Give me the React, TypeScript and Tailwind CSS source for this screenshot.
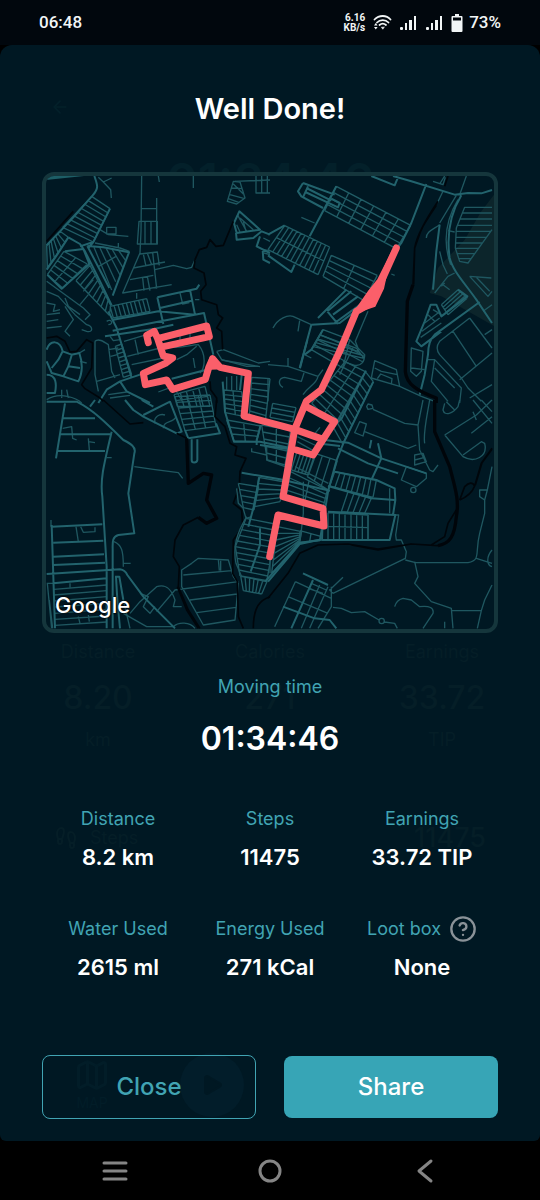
import React from 'react';
import { ArrowLeft, CircleHelp, Footprints, Map, Play } from 'lucide-react';

type Point = [number, number];

interface Block {
  corners: [Point, Point, Point, Point];
  cols: number;
  rows: number;
}

interface Tile {
  x: number;
  y: number;
  major: string[];
  minor: string[];
  river: string[];
  stream: string[];
  blocks: Block[];
}

const block = (corners: [Point, Point, Point, Point], cols: number, rows: number): Block => ({ corners, cols, rows });

// Streets of one housing block: the outline plus evenly spaced lanes
const blockPath = ({ corners: [a, b, c, d], cols, rows }: Block) => {
  const mix = (p: Point, q: Point, t: number) =>
    `${Math.round(p[0] + (q[0] - p[0]) * t)} ${Math.round(p[1] + (q[1] - p[1]) * t)}`;
  const lines: string[] = [];
  for (let i = 0; i <= cols; i++) lines.push(`M${mix(a, b, i / cols)}L${mix(d, c, i / cols)}`);
  for (let i = 0; i <= rows; i++) lines.push(`M${mix(a, d, i / rows)}L${mix(b, c, i / rows)}`);
  return lines.join('');
};

const tiles: Tile[] = [
  {
    x: -18,
    y: -24,
    major: [
      'M163 24C172 50 178 60 158 82L100 148L60 190L20 232',
      'M85 208L50 262L20 305M85 208L120 228L135 250L185 350L215 412',
      'M210 122L160 222L120 235M160 222L145 240',
      'M75 250L130 243L148 288L65 362L22 320',
      'M142 234L190 238L267 253L218 383M142 234L208 360',
      'M218 488L350 462L492 435L520 560',
      'M352 388L470 362L478 350M352 388L370 468M450 365L465 440M360 420L455 398',
      'M195 505L345 482L400 470M220 455L355 430L465 440',
      'M205 430L230 480L275 630M300 620L240 640L200 665L175 705',
      'M20 545C30 515 60 515 68 550L95 560L118 555C130 590 125 620 115 640L70 625L35 615L20 580M68 550L55 575L35 600M95 562L85 595L120 600M85 595L70 625M20 620C50 620 50 650 45 675L20 675',
      'M598 130L660 185L590 195L582 165ZM588 195L590 215L640 210L665 190L690 200M660 205L650 235L690 255M668 245L670 275L690 285',
      'M395 632L500 605M240 640L260 670L330 705',
    ],
    minor: [
      'M162 238L215 366M180 240L227 341M199 242L240 321M217 245L250 301M237 249L258 279M175 296L227 266',
      'M305 24L303 190L300 255L248 375L395 350M350 90V230M305 122H350M297 160H352V228H292ZM315 160V228M333 160V228',
      'M180 185L205 200L265 205M200 178H228V198H200ZM165 225L240 240L268 250M235 225V240',
      'M300 258L352 252L358 292M310 258L318 295M322 256L335 290M338 254L350 362M280 300L375 282M270 335L340 322M322 325L330 368M290 375V392M308 330L312 368',
      'M345 305L400 292L440 302L455 298L465 275',
      'M420 375L428 408L448 404M465 395H478M210 505L220 518L240 515M200 460C215 450 222 470 205 470',
      'M252 520L320 500M262 565L360 540M285 515L295 560M275 590L370 570',
      'M380 535C420 545 450 530 475 530C500 560 495 600 480 615M410 575L440 560L470 535M460 570L465 600M420 500V520M450 490V515',
      'M165 520C175 510 190 520 205 530L215 610L225 630M165 520V620L175 670M170 640L240 620M205 545L235 540M212 565L232 560M205 680L260 672M210 690L270 682',
      'M118 555L135 545M120 580L140 585M20 695C60 670 110 690 125 705M65 665V690M80 665L85 690',
      'M20 370L55 385L105 440L140 470C160 475 160 495 140 490L125 485M20 340L130 420L150 440L135 455M75 390L85 415L120 440M75 415L100 455L75 490L90 505M20 405L45 410L40 430L60 425M20 440L60 435M20 460L55 455M20 480L65 475',
      'M460 24V60M355 24L358 42M215 30L190 42L175 28M190 42L212 65L214 90',
      'M580 40L600 42L615 90L590 108L562 100ZM585 40L690 36M648 24V75H690M665 24V75M682 24V75M575 60L608 62M570 80L614 92M580 48L610 78M565 92L598 104',
      'M592 140L620 190M600 150L640 185M590 170L600 192M610 160L618 190M670 210L690 220M672 255L690 260M668 245L690 248',
      'M530 550L550 545L655 585L690 580M530 550L545 575L620 595L655 595',
      'M355 672L400 655L430 705M120 410L145 380M130 370L160 335',
    ],
    river: [],
    stream: [
      'M580 160L550 232L528 235L510 215L500 238L478 245L465 275L462 300L492 315L498 350L482 370L485 395L530 410L535 440L548 450L530 480L545 490L548 545',
      'M100 130L60 175L20 220',
      'M20 510L50 505L75 520L90 552L110 550L140 515L158 525L155 600L125 650L135 662L180 690L190 700M510 640L512 665L530 690V705',
    ],
    blocks: [
      block([[155, 85], [210, 122], [160, 222], [68, 178]], 1, 8),
      block([[60, 190], [85, 208], [22, 300], [20, 232]], 1, 6),
      block([[72, 250], [142, 288], [68, 360], [22, 320]], 2, 5),
      block([[108, 338], [150, 292], [212, 412], [208, 442]], 1, 8),
      block([[210, 415], [320, 392], [330, 430], [220, 450]], 9, 1),
      block([[226, 535], [245, 528], [275, 620], [250, 628]], 1, 8),
      block([[402, 680], [495, 655], [510, 715], [412, 715]], 5, 2),
    ],
  },
  {
    x: 666,
    y: -24,
    major: [
      'M375 24L430 40L560 80L600 75L640 76L672 66M310 24L380 52L390 28',
      'M475 48L455 100L430 165L400 225L385 245',
      'M515 170L505 250L495 365M580 82C545 140 535 200 545 270C555 310 590 345 625 395L672 465',
      'M105 45L90 70L100 85L165 120M105 45L200 80M120 55L105 88M115 60L190 98M112 72L210 118L215 105L190 92',
      'M205 55L125 205M0 200L50 172M0 262L70 312L80 290',
      'M130 470L215 465L300 400M130 470L95 600',
      'M150 450L235 365M178 430L250 370M195 440L270 385M200 465L290 400M178 430L210 468',
      'M570 365L598 385L520 445L505 410L488 410L470 460L445 520L460 535L520 490',
      'M635 402L500 500Q480 520 480 560L470 620L455 680',
      'M165 485L130 545L110 560',
    ],
    minor: [
      'M565 82L515 165M530 24L515 48M595 24L575 80M495 40L525 50L532 28M525 70L508 105M570 95C525 170 530 240 548 290',
      'M475 210C475 190 495 185 515 170M515 250L525 290L538 318M540 188L560 192',
      'M672 118H590L565 180L562 240L575 280L600 285L672 185M584 135H672M577 153H672M568 172H672M564 190H668M563 208H655M562 225H643M564 241H632M568 257H620M573 272H610',
      'M605 325L670 330M605 325L660 385L672 370M625 328L665 370M500 375L520 350L540 325L560 315M525 350L545 365M520 355L530 345',
      'M100 148L140 165M370 318L380 322M15 480C30 450 60 440 75 445L130 470M95 458L90 490',
      'M245 515L290 560C290 580 280 595 260 592L225 580M230 530L288 565M225 550L285 582M300 430L262 520L272 545M110 560L130 570M255 540L215 620',
      'M0 590L60 595L150 625L165 605M60 570V595M108 615L100 640L50 628C30 630 30 650 45 658M0 630V700M150 625C145 650 120 655 105 680',
      'M320 578L310 630L395 655L385 605ZM320 600L340 610L388 620M328 632L338 618L372 632L370 648M395 655L460 685L500 700',
      'M605 450L515 520Q500 540 515 560L580 630L600 660L640 700M605 450L672 540M555 490L625 595M672 555L575 635M605 690L672 650M500 575L580 660L575 705M480 575H500L490 640L540 700M430 540L465 550L460 610L445 625L428 610ZM430 600L470 605M500 600L560 660M650 500L672 485M645 430L672 410',
      'M510 435L470 465M515 450L462 490M520 465L458 508M480 440L500 460M495 425L520 440',
    ],
    river: ['M435 350L418 400L412 610C415 650 450 670 505 690V705'],
    stream: [
      'M540 24L530 55M505 112C480 150 450 190 440 240L435 350',
      'M510 100C490 130 470 160 458 190L440 240L437 350',
    ],
    blocks: [
      block([[205, 55], [428, 172], [385, 242], [170, 128]], 6, 4),
      block([[50, 173], [185, 237], [150, 320], [0, 245]], 11, 2),
      block([[190, 262], [328, 322], [288, 398], [165, 325]], 2, 4),
      block([[165, 485], [245, 515], [225, 600], [130, 545]], 1, 4),
      block([[570, 365], [598, 390], [540, 440], [520, 410]], 4, 1),
    ],
  },
  {
    x: -18,
    y: 672,
    major: [
      'M20 5H110C160 30 200 70 250 120C270 130 290 140 283 160L265 280L283 400L235 405C215 410 218 430 218 450V685',
      'M215 95C190 200 180 240 187 290L200 500V685',
      'M20 522L240 508Q255 510 262 525L310 590L405 685',
      'M70 55H165M60 103H215M50 153H195M165 0L150 20M75 10L48 175',
      'M35 375L45 685M35 380L187 373M40 428L190 422M40 470L192 463M40 495L195 488M40 550L200 535',
      'M255 0L280 30L310 50L410 100L425 95L390 5L310 45M305 0L340 20',
      'M435 90L445 115L540 100L528 70M455 118V180C455 190 470 190 472 180V118',
      'M228 530L232 600L240 685M225 530H238L250 600',
    ],
    minor: [
      'M68 85L95 80L98 115L110 120M145 115L148 150M145 125L165 128M200 173H215M33 360V380',
      'M283 200L340 208L415 218L428 235M108 380L115 425M122 380L130 397L165 395V382',
      'M42 568L200 555M42 585L200 572M42 603L200 590M42 621L200 610M44 640L200 628M45 658L200 648M45 676L200 666M20 550H40M22 550L35 685M115 650L120 670M145 645L148 665M90 550V562M28 600L38 685',
      'M222 425C245 435 250 450 250 500M250 490H272M250 600L270 685M250 640L320 680H400C415 665 450 665 465 685',
      'M270 640L300 605L350 560C380 550 395 570 405 600L400 620L425 620M300 580L325 590L310 620L330 640L345 620M350 635L405 570L595 545',
      'M425 510L455 490L475 475L565 480L580 530L595 550L585 660L490 675L425 560ZM430 525L575 512M450 600L592 582M470 638L588 622M535 478L538 512M542 478V512',
      'M345 70C340 50 360 40 375 45M370 85C370 60 400 70 408 50',
    ],
    river: ['M440 115L445 250L490 220L515 225L500 300L530 355L500 370L475 352'],
    stream: [
      'M410 100L440 115M475 352L430 375L405 420L400 470L418 500L415 560L445 630L480 685M412 560L440 630L475 685',
      'M190 0L270 72L310 68',
      'M530 0L525 50L555 80L570 130L590 140L585 165L618 175L600 215L598 260L580 310L605 330L608 380L580 420L578 520L592 545L595 650L610 685',
      'M640 685C640 620 660 600 690 590',
    ],
    blocks: [block([[405, -10], [510, -15], [528, 80], [435, 92]], 3, 6)],
  },
  {
    x: 666,
    y: 672,
    major: [
      'M165 330L162 420H365L382 345L180 335',
      'M170 120L240 128L340 175L475 220M210 145L300 190L390 220M340 175L310 240M310 120L305 145M330 130L340 175',
      'M200 215L325 240L380 265L382 300L375 345M180 258L310 295L380 300M162 418L95 432L0 545',
      'M105 520L180 555M135 540L70 685M45 620L140 655L185 660L205 685',
    ],
    minor: [
      'M365 265V340M300 345V420',
      'M300 12L312 15L315 25L300 28L296 20ZM315 28L410 70L450 75M275 65L295 72L285 108L260 98ZM290 95L420 145L445 135',
      'M465 0L450 75L455 150L485 210L495 215L510 195M485 0C475 60 465 100 470 130M440 165L465 160L475 185L440 195ZM440 180L470 172M415 200L475 220V235L445 260L400 240Z',
      'M444 270A8 8 0 1 1 428 270A8 8 0 1 1 444 270M349 663A8 8 0 1 1 333 663A8 8 0 1 1 349 663',
      'M380 345H392L383 405L385 420H400L415 455L412 475L195 580M412 480L440 487L600 488C640 480 620 460 635 400L650 340V300L635 290V270H658L650 300M658 270L672 200M625 475L672 490M672 450C655 470 655 495 672 500',
      'M440 485L450 530L440 550L490 605L550 625L555 685M550 632H640L650 600L672 555M640 632L628 685',
      'M380 620Q385 600 405 595L430 600L455 620Q500 615 495 640L465 685M195 622L220 625L250 638L290 635L333 660M349 666L380 670L388 685M530 665V685',
      'M82 545L20 680M82 545L190 595M60 590L180 640M155 555L100 685M180 560L125 685M190 560V620L150 685M195 580L185 570L225 532M120 565L165 580M130 550L175 570',
      'M530 105L625 45L672 0M530 105L585 170C620 190 660 170 650 130L640 125L585 165M615 0L672 70M610 100L672 50M530 10L525 30C530 50 555 40 570 20L575 0M535 5L560 30M615 35L625 60M640 0L672 35',
    ],
    river: ['M500 0V95L545 200C560 260 575 300 565 350C560 410 545 430 510 437'],
    stream: [
      'M510 437L430 432L330 447L240 432L150 435L95 460L60 520L0 595M430 432L330 450L250 435',
      'M620 258L640 190L672 145M622 255L642 188L672 148M575 300L590 260Q610 240 620 258Q610 285 575 300M565 330L540 370L530 410L490 435',
    ],
    blocks: [
      block([[200, 215], [325, 240], [315, 292], [185, 258]], 8, 1),
      block([[240, 275], [310, 295], [290, 340], [220, 335]], 4, 1),
      block([[180, 338], [300, 345], [300, 420], [180, 420]], 7, 2),
    ],
  },
  // Old town, between the two rivers
  {
    x: 522,
    y: 492,
    major: [
      'M438 92L365 235L330 270M460 125L370 310L350 360L325 450L300 600L240 608L135 725',
      'M8 125L15 215L42 305H120L215 325M120 315L225 330',
      'M118 412L100 505L85 560M120 565V615L92 695M65 398L180 418L330 452',
      'M65 105L60 150M110 315V300L122 255M290 310L360 318M262 0L240 85',
    ],
    minor: [
      'M80 530C50 580 38 620 48 670L65 710M68 500L78 535L95 530M50 445L55 490L70 505',
      'M95 325V335L140 345M140 320V360L210 385M250 425V520L240 605M150 655V700M225 380L325 430',
      'M285 280L300 262M232 290L290 318M232 305L285 335M35 108V150M20 110V150M50 108V150M5 60L120 80',
    ],
    river: [],
    stream: [],
    blocks: [
      block([[12, 150], [65, 155], [75, 230], [16, 218]], 2, 5),
      block([[95, 112], [150, 116], [136, 245], [88, 230]], 1, 7),
      block([[20, 240], [122, 258], [110, 305], [42, 303]], 2, 3),
      block([[125, 255], [212, 270], [195, 375], [142, 360]], 2, 5),
      block([[158, 190], [228, 203], [218, 245], [150, 232]], 1, 3),
      block([[55, 430], [116, 440], [102, 510], [70, 503]], 1, 4),
      block([[116, 412], [195, 426], [180, 485], [104, 500]], 1, 5),
      block([[212, 395], [322, 450], [310, 500], [198, 470]], 2, 4),
      block([[232, 332], [285, 350], [265, 405], [214, 390]], 5, 1),
      block([[285, 340], [352, 362], [325, 450], [262, 410]], 3, 1),
      block([[78, 535], [165, 552], [155, 640], [46, 620]], 1, 5),
      block([[46, 620], [155, 640], [140, 725], [60, 708]], 1, 5),
      block([[172, 560], [245, 575], [238, 608], [155, 700]], 1, 7),
      block([[240, 572], [305, 590], [300, 602], [238, 607]], 2, 1),
      block([[62, 708], [142, 722], [125, 762], [70, 752]], 6, 1),
      block([[375, 65], [436, 95], [345, 260], [275, 190]], 2, 9),
      block([[436, 95], [460, 125], [368, 312], [340, 262]], 1, 10),
      block([[300, -15], [410, 25], [432, 55], [280, 20]], 1, 3),
    ],
  },
];

const routePath = [
  'M307 500L302 478L325 466L335 488L482 450L490 482L352 512M335 488L352 540L380 546L358 562L292 592L298 626L362 612L380 640L478 610L488 575L500 548L522 574L607 592L594 720L746 760L831 790',
  'M1051 216L1006 316L976 381L931 406L881 526L826 641L781 676L746 760L711 962L831 997L834 1050L696 1017L671 1142',
  'M781 692L866 737L801 837L751 822',
].join('');

const stats = [
  { label: 'Distance', value: '8.2 km' },
  { label: 'Steps', value: '11475' },
  { label: 'Earnings', value: '33.72 TIP' },
  { label: 'Water Used', value: '2615 ml' },
  { label: 'Energy Used', value: '271 kCal' },
  { label: 'Loot box', value: 'None', help: true },
];

const SignalBars = () => (
  <svg viewBox="0 0 17 16" className="h-4 w-[17px]" fill="currentColor" aria-hidden="true">
    <rect x="0" y="12" width="3" height="3" rx="1" />
    <rect x="5" y="8" width="2" height="7" />
    <rect x="9" y="5" width="3" height="10" />
    <rect x="14" y="1" width="2" height="14" />
  </svg>
);

const StatusBar = () => (
  <header className="flex h-[45px] items-center justify-between bg-[#01070d] px-[39px] font-['Roboto',sans-serif] text-[#f1f5f6]">
    <span className="text-[17px] font-medium">06:48</span>
    <div className="flex items-center">
      <div className="mr-2 text-right text-[10px] leading-[10px] font-bold">
        <div>6.16</div>
        <div>KB/s</div>
      </div>
      <svg
        viewBox="0 0 19 17"
        className="mr-2 h-[17px] w-[19px]"
        fill="none"
        stroke="currentColor"
        strokeWidth="1.8"
        strokeLinecap="round"
        aria-hidden="true"
      >
        <path d="M1.500 5.500C6 .8 13.500 .8 17.500 5.500M4 8.500C7 5.300 12.500 5.300 15.500 8.500M6.500 11C8.500 9.300 11 9.300 13 11" />
        <path d="M9.800 13.200L8.400 13.200L9.800 15.200L11.200 13.200Z" fill="currentColor" strokeWidth="0.600" />
        <path d="M1 11.500L2.800 9L4.600 11.500ZM1 13L2.800 15.500L4.600 13Z" fill="currentColor" stroke="none" />
      </svg>
      <div className="mr-2 flex gap-[9px]">
        <SignalBars />
        <SignalBars />
      </div>
      <svg viewBox="0 0 12 20" className="mr-1.5 h-5 w-3" aria-hidden="true">
        <path
          fill="currentColor"
          fillRule="evenodd"
          d="M4 1H8V3H10.500Q11.500 3 11.500 4V18Q11.500 19 10.500 19H1.500Q.5 19 .5 18V4Q.5 3 1.500 3H4ZM2 4.500V7.500H10V4.500Z"
        />
      </svg>
      <span className="text-[17px] font-medium">73%</span>
    </div>
  </header>
);

// Tracking screen that faintly shows through the sheet
const Backdrop = () => (
  <div className="pointer-events-none absolute inset-0 px-[42px] text-[#03202a]" aria-hidden="true">
    <div className="flex h-[605px] flex-col pt-[52px]">
      <ArrowLeft className="ml-2 h-5 w-5" />
      <div className="mt-10 text-center text-5xl font-semibold">01:34:46</div>
    </div>
    <div className="grid grid-cols-3 text-center text-[#051e27]">
      {[
        ['Distance', '8.20', 'km'],
        ['Calories', '271', ''],
        ['Earnings', '33.72', 'TIP'],
      ].map(([label, value, unit], i) => (
        <div key={label} className={i === 0 ? 'pr-10' : i === 2 ? 'pl-10' : ''}>
          <div className="mt-[-12px] text-lg">{label}</div>
          <div className="mt-3 text-[32px] leading-10 font-medium">{value}</div>
          <div className="mt-2 h-7 text-lg">{unit}</div>
        </div>
      ))}
    </div>
    <div className="mt-16 flex items-center justify-between px-3 text-[#051e27]">
      <span className="flex items-center gap-3 text-lg">
        <Footprints className="h-6 w-6" />
        Steps
      </span>
      <span className="text-[27px] font-medium">11475</span>
    </div>
    <div className="mt-[194px] flex items-center gap-[70px] pl-8 text-[#021d28]">
      <div className="flex flex-col items-center text-sm">
        <Map className="h-9 w-9" />
        MAP
      </div>
      <div className="flex h-16 w-16 items-center justify-center rounded-full bg-[#021d2a]">
        <Play className="h-6 w-6 fill-[#001823] text-[#001823]" />
      </div>
    </div>
  </div>
);

const RouteMap = () => (
  <div className="relative mt-[43px] overflow-hidden rounded-xl border-4 border-[#15363c] bg-[#001823]">
    <svg viewBox="0 0 1344 1359" className="block h-auto w-full" fill="none" strokeLinejoin="round" role="img" aria-label="Route map">
      <path d="M1344 56L1306 106L1256 191L1176 276L1151 351L1186 361L1344 450Z" fill="#0c252b" />
      <path d="M0 0H114L0 12Z" fill="#1d5e66" />
      {tiles.map((tile) => (
        <g key={`${tile.x},${tile.y}`} transform={`translate(${tile.x} ${tile.y})`}>
          <path d={tile.blocks.map(blockPath).join('')} stroke="#205c65" strokeWidth="4" />
          <path d={tile.minor.join('')} stroke="#1f5760" strokeWidth="4" />
          <path d={tile.major.join('')} stroke="#22636d" strokeWidth="6" />
          <path d={tile.stream.join('')} stroke="#00060b" strokeWidth="5" />
          <path d={tile.river.join('')} stroke="#00050a" strokeWidth="10" />
        </g>
      ))}
      <path d="M1040 218L994 310L966 345L928 400L948 406L988 392L1014 338Z" fill="#fb5f6a" />
      <path d={routePath} stroke="#fb5f6a" strokeWidth="21" strokeLinecap="round" />
      <path d="M478 582L492 540L506 540L530 580Z" fill="#fb5f6a" />
    </svg>
    <span className="absolute bottom-2 left-[9px] text-[22px] leading-8 font-medium text-white [text-shadow:0_0_2px_#000,0_0_2px_#000]">
      Google
    </span>
  </div>
);

export default function App() {
  return (
    <div className="flex min-h-screen flex-col bg-black font-['Inter',sans-serif]">
      <StatusBar />
      <main className="relative flex-1 overflow-hidden rounded-t-xl rounded-b-md bg-[#001823]">
        <Backdrop />
        <div className="relative px-[42px] pt-11 pb-[22px] text-center">
          <h1 className="text-[29px] leading-10 font-semibold text-white">Well Done!</h1>

          <RouteMap />

          <dl className="mt-10">
            <dt className="text-lg leading-7 text-[#41a4b3]">Moving time</dt>
            <dd className="mt-4 text-[32px] leading-[44px] font-semibold text-white">01:34:46</dd>
          </dl>

          <dl className="mt-11 grid grid-cols-3 gap-y-[42px]">
            {stats.map((stat) => (
              <div key={stat.label}>
                <dt className="flex h-7 items-center justify-center gap-2 text-lg whitespace-nowrap text-[#41a4b3]">
                  {stat.label}
                  {stat.help && (
                    <button type="button" aria-label="About loot boxes" className="text-[#8a9298]">
                      <CircleHelp className="h-7 w-7" strokeWidth={2} />
                    </button>
                  )}
                </dt>
                <dd className="mt-2 text-[22px] leading-8 font-semibold text-white">{stat.value}</dd>
              </div>
            ))}
          </dl>

          <div className="mt-[72px] grid grid-cols-2 gap-7">
            <button type="button" className="h-16 rounded-lg border border-[#41a4b3] text-2xl font-medium text-[#41a4b3]">
              Close
            </button>
            <button type="button" className="my-px rounded-lg bg-[#37a5b6] text-2xl font-medium text-white">
              Share
            </button>
          </div>
        </div>
      </main>
      <nav className="flex h-[59px] items-center justify-between px-[101px] text-[#858585]">
        <button type="button" aria-label="Recent apps">
          <svg viewBox="0 0 28 28" className="h-7 w-7" stroke="currentColor" strokeWidth="3" strokeLinecap="round">
            <path d="M3 6H25M3 14H25M3 22H25" />
          </svg>
        </button>
        <button type="button" aria-label="Home">
          <svg viewBox="0 0 28 28" className="h-7 w-7" fill="none" stroke="currentColor" strokeWidth="3">
            <circle cx="14" cy="14" r="10" />
          </svg>
        </button>
        <button type="button" aria-label="Back">
          <svg viewBox="0 0 28 28" className="h-7 w-7" fill="none" stroke="currentColor" strokeWidth="3" strokeLinecap="round" strokeLinejoin="round">
            <path d="M20 4L8 14L20 24" />
          </svg>
        </button>
      </nav>
    </div>
  );
}
